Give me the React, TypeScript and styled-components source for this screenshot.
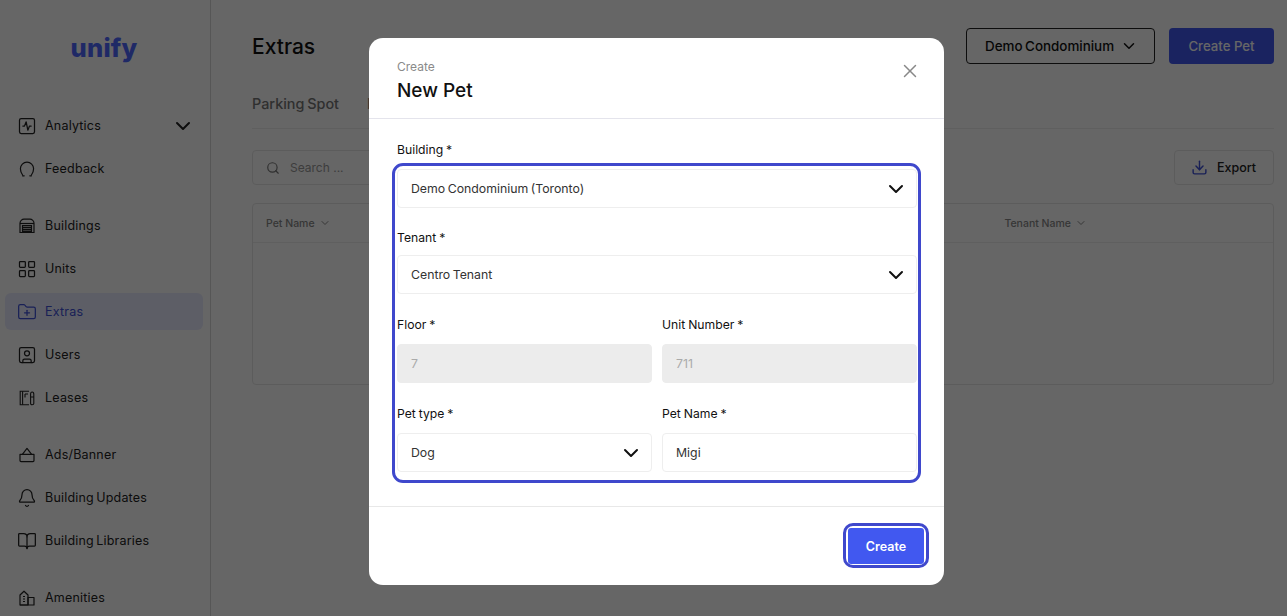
import React from 'react';
import styled, { createGlobalStyle } from 'styled-components';
import {
  Bell,
  BookOpen,
  ChevronDown,
  Download,
  FolderPlus,
  LayoutGrid,
  Search,
  SquareActivity,
  SquareUser,
  X,
} from 'lucide-react';

const FONT = '"Inter", "Liberation Sans", sans-serif';
const ANNOTATION = '#3f48cc';

const GlobalStyles = createGlobalStyle`
  html, body {
    margin: 0;
    height: 100%;
    overflow: hidden;
    background: #fff;
    font-family: ${FONT};
  }
  * {
    box-sizing: border-box;
  }
`;

const Page = styled.div`
  display: flex;
  height: 100vh;
  overflow: hidden;
`;

const Sidebar = styled.aside`
  width: 211px;
  flex-shrink: 0;
  border-right: 1px solid #d8d8d8;
  padding: 0 7px 0 5px;
`;

const Logo = styled.div`
  height: 104px;
  padding-top: 30px;
  text-align: center;
  font-size: 25.5px;
  line-height: 36px;
  font-weight: 800;
  letter-spacing: 0.2px;
  color: #4f68ff;
`;

const NavGroup = styled.div`
  display: flex;
  flex-direction: column;
  margin-bottom: 14px;
`;

const NavItem = styled.div<{ active?: boolean }>`
  display: flex;
  align-items: center;
  gap: 10px;
  height: ${props => (props.active ? 37 : 43)}px;
  margin: ${props => (props.active ? 3 : 0)}px 0;
  padding-left: 14px;
  border-radius: 6px;
  background: ${props => (props.active ? '#e8ebff' : 'transparent')};
  font-size: 12.5px;
  letter-spacing: 0.2px;
  word-spacing: -1.5px;
  color: ${props => (props.active ? '#3f51d8' : '#222')};
  svg {
    flex-shrink: 0;
    width: 16px;
    height: 16px;
  }
`;

const LucideSlot = styled.span`
  display: flex;
  margin: -2px;
  svg {
    width: 20px;
    height: 20px;
  }
`;

const NavChevron = styled.span`
  display: flex;
  margin-left: auto;
  margin-right: 8px;
  svg {
    width: 24px;
    height: 24px;
  }
`;

const Main = styled.main`
  flex: 1;
  min-width: 0;
  padding: 28px 13px 0 41px;
`;

const TopBar = styled.div`
  display: flex;
  align-items: center;
  gap: 14px;
  height: 36px;
`;

const Title = styled.h1`
  flex: 1;
  margin: 0;
  font-size: 21px;
  font-weight: 500;
  color: #111;
`;

const BuildingSelect = styled.div`
  display: flex;
  align-items: center;
  justify-content: space-between;
  width: 189px;
  height: 36px;
  padding: 0 16px 0 18px;
  border: 1px solid #222;
  border-radius: 4px;
  font-size: 13.4px;
  font-weight: 500;
  word-spacing: -1px;
  color: #111;
`;

const PrimaryButton = styled.button`
  width: 105px;
  height: 36px;
  border: 0;
  border-radius: 4px;
  background: #4158f0;
  color: #fff;
  font-family: ${FONT};
  font-size: 13.2px;
  font-weight: 500;
`;

const Tabs = styled.div`
  display: flex;
  gap: 28px;
  height: 43px;
  margin-top: 22px;
  padding-top: 9px;
  border-bottom: 1px solid #eee;
`;

const Tab = styled.span`
  font-size: 14.4px;
  line-height: 18px;
  font-weight: 500;
  word-spacing: -1px;
  color: #777;
  white-space: nowrap;
`;

const Toolbar = styled.div`
  display: flex;
  justify-content: space-between;
  height: 35px;
  margin-top: 21px;
`;

const SearchBox = styled.div`
  display: flex;
  align-items: center;
  gap: 10px;
  width: 340px;
  padding-left: 13px;
  border: 1px solid #e6e6e6;
  border-radius: 4px;
  font-size: 12px;
  color: #999;
`;

const ExportButton = styled.div`
  display: flex;
  align-items: center;
  gap: 9px;
  width: 100px;
  padding-left: 16px;
  border: 1px solid #e6e6e6;
  border-radius: 4px;
  font-size: 12.5px;
  font-weight: 500;
  color: #222;
`;

const Table = styled.div`
  height: 182px;
  margin-top: 18px;
  border: 1px solid #e6e6e6;
  border-radius: 4px;
`;

const TableHead = styled.div`
  display: flex;
  justify-content: space-between;
  height: 39px;
  padding: 0 186px 0 13px;
  border-bottom: 1px solid #eee;
`;

const HeadCell = styled.div`
  display: flex;
  align-items: center;
  gap: 4px;
  font-size: 10.5px;
  font-weight: 500;
  color: #888;
`;

const Overlay = styled.div`
  position: fixed;
  inset: 0;
  background: rgba(0, 0, 0, 0.6);
`;

const Modal = styled.div`
  position: fixed;
  top: 38px;
  left: 369px;
  width: 575px;
  height: 547px;
  background: #fff;
  border-radius: 14px;
  display: flex;
  flex-direction: column;
`;

const ModalHeader = styled.header`
  display: flex;
  justify-content: space-between;
  height: 81px;
  padding: 20px 23px 0 28px;
  border-bottom: 1px solid #e4e4ec;
`;

const Eyebrow = styled.div`
  font-size: 12px;
  line-height: 17px;
  color: #8a8a8a;
`;

const ModalTitle = styled.h2`
  margin: 3px 0 0;
  font-size: 19px;
  line-height: 26px;
  font-weight: 500;
  color: #111;
`;

const CloseIcon = styled.span`
  display: flex;
  height: 22px;
  margin-top: 2px;
  color: #888;
`;

const Form = styled.div`
  position: relative;
  flex: 1;
  display: flex;
  flex-direction: column;
  gap: 21px;
  margin: 21px 27px 34px 28px;
`;

const FieldRow = styled.div<{ offset?: number }>`
  display: grid;
  grid-template-columns: 1fr 1fr;
  column-gap: 10px;
  margin-top: ${props => props.offset ?? 0}px;
`;

const Field = styled.div<{ span?: boolean; labelGap?: number }>`
  display: flex;
  flex-direction: column;
  gap: ${props => props.labelGap ?? 10}px;
  ${props => (props.span ? 'grid-column: 1 / -1;' : '')}
`;

const Label = styled.label`
  font-size: 12.2px;
  line-height: 19px;
  font-weight: 400;
  word-spacing: -0.5px;
  color: #111;
`;

const Control = styled.div<{ disabled?: boolean }>`
  display: flex;
  align-items: center;
  justify-content: space-between;
  height: 39px;
  padding: 0 8px 0 13px;
  border: 1px solid ${props => (props.disabled ? '#ececec' : '#eeeeee')};
  border-radius: 4px;
  background: ${props => (props.disabled ? '#ececec' : '#fff')};
  font-size: 12.3px;
  word-spacing: -1px;
  color: ${props => (props.disabled ? '#aaa' : '#333')};
  svg {
    color: #111;
  }
`;

const FormHighlight = styled.div`
  position: absolute;
  inset: 23px -4px -11px -5px;
  border: 3px solid ${ANNOTATION};
  border-radius: 11px;
  pointer-events: none;
`;

const ModalFooter = styled.footer`
  display: flex;
  justify-content: flex-end;
  height: 79px;
  padding: 20px 19px 0 0;
  border-top: 1px solid #e8e8e8;
`;

const SubmitWrap = styled.div`
  position: relative;
  width: 78px;
  height: 38px;
  padding: 1px;
`;

const SubmitButton = styled.button`
  width: 100%;
  height: 100%;
  border: 0;
  border-radius: 3px;
  background: #4158f0;
  color: #fff;
  font-family: ${FONT};
  font-size: 12.5px;
  font-weight: 600;
`;

const SubmitHighlight = styled.div`
  position: absolute;
  inset: -4px -4px -3px -4px;
  border: 3px solid ${ANNOTATION};
  border-radius: 10px;
  pointer-events: none;
`;

const FeedbackIcon = () => (
  <svg viewBox="0 0 16 16" fill="none" stroke="currentColor" strokeWidth="1.2" strokeLinecap="round">
    <path d="M3.6 14C2.2 12 1.4 10 1.4 7.8a6.6 6.6 0 0 1 13.2 0c0 2.2-.8 4.2-2.2 6.2" />
    <path d="M3.6 14.8h1.6M10.8 14.8h1.6" />
  </svg>
);

const BuildingsIcon = () => (
  <svg viewBox="0 0 16 16" fill="none" stroke="currentColor" strokeWidth="1.2">
    <path d="M1 14.5V5.2C1 3 3 1.2 5 1.2h6c2 0 4 1.8 4 4v9.3z" />
    <path d="M1 5.5h14" />
    <path d="M3.5 7.5h9v7h-9z" fill="currentColor" fillOpacity="0.35" />
    <path d="M3.5 9.5h9M3.5 11.5h9M3.5 13.3h9" />
  </svg>
);

const LeasesIcon = () => (
  <svg viewBox="0 0 16 16" fill="none" stroke="currentColor" strokeWidth="1.1">
    <path d="M10 1.2H1.2v13.6H10" />
    <path d="M3.6 1.2v13.6M6 4v3.4M6 4h3" />
    <path d="M11.6 4.2c0-3 3.2-3 3.2 0v9.4c0 1.6-3.2 1.6-3.2 0zM11.6 7h3.2" />
  </svg>
);

const AdsIcon = () => (
  <svg viewBox="0 0 16 16" fill="none" stroke="currentColor" strokeWidth="1.2" strokeLinejoin="round">
    <path d="M1 7.4h14v6.2a1 1 0 0 1-1 1H2a1 1 0 0 1-1-1z" />
    <path d="M3.4 7.4 8 1.4l4.6 6" />
  </svg>
);

const AmenitiesIcon = () => (
  <svg viewBox="0 0 16 16" fill="none" stroke="currentColor" strokeWidth="1.2" strokeLinejoin="round">
    <path d="M1 15V5l4-3.8L9 5v10z" />
    <path d="M9 7.5h6V15H9zM1 15h14M4 6.5h2M4 9h2M4 11.5h2" />
  </svg>
);

const navGroups = [
  [
    {
      label: 'Analytics',
      icon: (
        <LucideSlot>
          <SquareActivity strokeWidth={1.5} />
        </LucideSlot>
      ),
      chevron: true,
    },
    { label: 'Feedback', icon: <FeedbackIcon /> },
  ],
  [
    { label: 'Buildings', icon: <BuildingsIcon /> },
    {
      label: 'Units',
      icon: (
        <LucideSlot>
          <LayoutGrid strokeWidth={1.5} />
        </LucideSlot>
      ),
    },
    {
      label: 'Extras',
      icon: (
        <LucideSlot>
          <FolderPlus strokeWidth={1.5} />
        </LucideSlot>
      ),
      active: true,
    },
    {
      label: 'Users',
      icon: (
        <LucideSlot>
          <SquareUser strokeWidth={1.5} />
        </LucideSlot>
      ),
    },
    { label: 'Leases', icon: <LeasesIcon /> },
  ],
  [
    { label: 'Ads/Banner', icon: <AdsIcon /> },
    {
      label: 'Building Updates',
      icon: (
        <LucideSlot>
          <Bell strokeWidth={1.5} />
        </LucideSlot>
      ),
    },
    {
      label: 'Building Libraries',
      icon: (
        <LucideSlot>
          <BookOpen strokeWidth={1.5} />
        </LucideSlot>
      ),
    },
  ],
  [{ label: 'Amenities', icon: <AmenitiesIcon /> }],
];

const App: React.FC = () => (
  <>
    <GlobalStyles />
    <Page>
      <Sidebar>
        <Logo>unify</Logo>
        {navGroups.map((group, i) => (
          <NavGroup key={i}>
            {group.map(item => (
              <NavItem key={item.label} active={item.active}>
                {item.icon}
                {item.label}
                {item.chevron && (
                  <NavChevron>
                    <ChevronDown />
                  </NavChevron>
                )}
              </NavItem>
            ))}
          </NavGroup>
        ))}
      </Sidebar>
      <Main>
        <TopBar>
          <Title>Extras</Title>
          <BuildingSelect>
            Demo Condominium
            <ChevronDown size={18} />
          </BuildingSelect>
          <PrimaryButton>Create Pet</PrimaryButton>
        </TopBar>
        <Tabs>
          <Tab>Parking Spot</Tab>
          <Tab>Pets</Tab>
        </Tabs>
        <Toolbar>
          <SearchBox>
            <Search size={14} color="#777" />
            Search ...
          </SearchBox>
          <ExportButton>
            <Download size={17} color="#3f51d8" />
            Export
          </ExportButton>
        </Toolbar>
        <Table>
          <TableHead>
            <HeadCell>
              Pet Name
              <ChevronDown size={12} />
            </HeadCell>
            <HeadCell>
              Tenant Name
              <ChevronDown size={12} />
            </HeadCell>
          </TableHead>
        </Table>
      </Main>
    </Page>
    <Overlay />
    <Modal>
      <ModalHeader>
        <div>
          <Eyebrow>Create</Eyebrow>
          <ModalTitle>New Pet</ModalTitle>
        </div>
        <CloseIcon>
          <X size={22} strokeWidth={1.6} />
        </CloseIcon>
      </ModalHeader>
      <Form>
        <FieldRow>
          <Field span>
            <Label>Building *</Label>
            <Control>
              Demo Condominium (Toronto)
              <ChevronDown size={24} />
            </Control>
          </Field>
        </FieldRow>
        <FieldRow offset={-1}>
          <Field span labelGap={8}>
            <Label>Tenant *</Label>
            <Control>
              Centro Tenant
              <ChevronDown size={24} />
            </Control>
          </Field>
        </FieldRow>
        <FieldRow>
          <Field>
            <Label>Floor *</Label>
            <Control disabled>7</Control>
          </Field>
          <Field>
            <Label>Unit Number *</Label>
            <Control disabled>711</Control>
          </Field>
        </FieldRow>
        <FieldRow>
          <Field>
            <Label>Pet type *</Label>
            <Control>
              Dog
              <ChevronDown size={24} />
            </Control>
          </Field>
          <Field>
            <Label>Pet Name *</Label>
            <Control>Migi</Control>
          </Field>
        </FieldRow>
        <FormHighlight />
      </Form>
      <ModalFooter>
        <SubmitWrap>
          <SubmitButton>Create</SubmitButton>
          <SubmitHighlight />
        </SubmitWrap>
      </ModalFooter>
    </Modal>
  </>
);

export default App;
